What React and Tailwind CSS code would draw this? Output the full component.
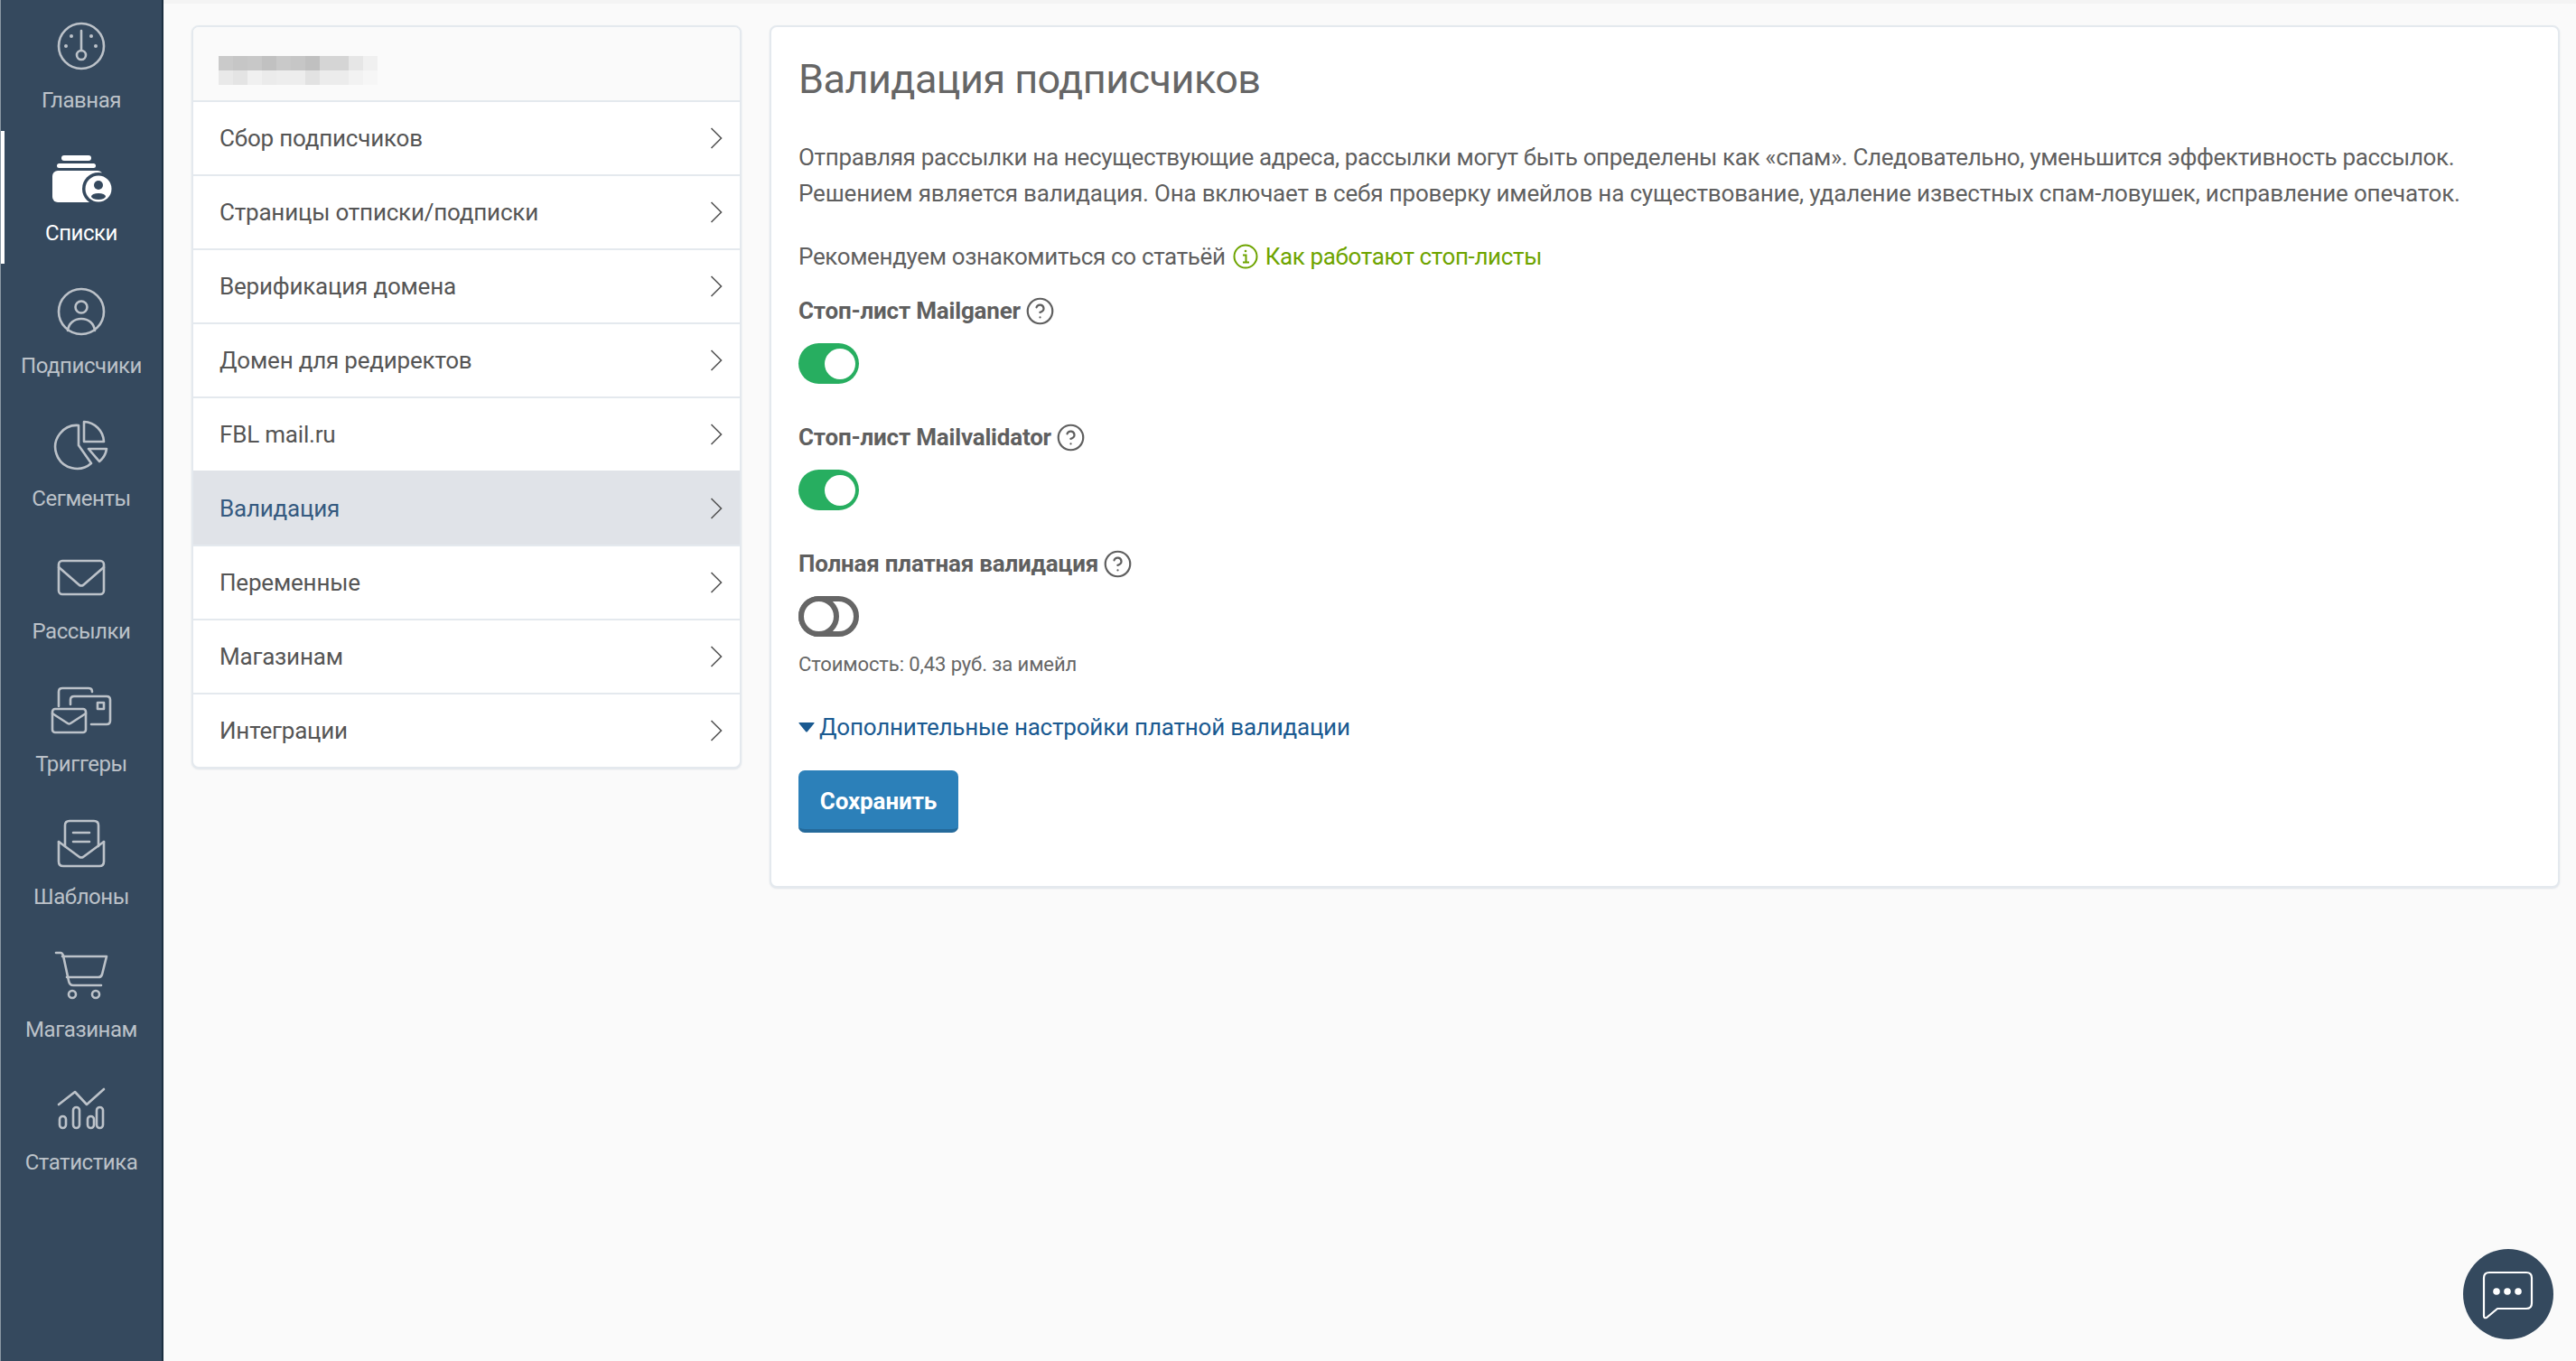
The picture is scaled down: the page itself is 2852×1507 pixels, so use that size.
import React from "react";
import { CircleHelp } from "lucide-react";

const font = { fontFamily: '"Roboto", "Noto Sans", sans-serif' };

const S = ({ top, children, fg = "#bcc2c9" }) => (
  <svg width="80" height="86" viewBox={`50 ${top} 80 86`} fill="none" stroke={fg} strokeWidth="2.6" strokeLinecap="round" strokeLinejoin="round">
    {children}
  </svg>
);

const nav = [
  { label: "Главная", top: -2, icon: (
    <>
      <circle cx="90" cy="51" r="25" />
      <path d="M90 34V56" />
      <circle cx="90" cy="61" r="5" />
      <g fill="#bcc2c9" stroke="none">
        <circle cx="79" cy="40" r="2" /><circle cx="101" cy="40" r="2" /><circle cx="73" cy="51" r="2" /><circle cx="106" cy="51" r="2" />
      </g>
    </>
  )},
  { label: "Списки", top: 145, active: true, icon: (
    <>
      <g fill="#fff" stroke="none">
        <rect x="68" y="172" width="33" height="6" rx="3" />
        <rect x="63" y="181" width="43" height="5" rx="2.5" />
        <rect x="58" y="189" width="56" height="35" rx="6" />
        <circle cx="109" cy="209" r="18" fill="#35495e" />
        <circle cx="109" cy="209" r="14.5" />
      </g>
      <g fill="#35495e" stroke="none">
        <circle cx="109" cy="205" r="5" />
        <ellipse cx="109" cy="217.5" rx="8" ry="3.5" />
      </g>
    </>
  )},
  { label: "Подписчики", top: 292, icon: (
    <>
      <circle cx="90" cy="345" r="25" />
      <circle cx="90" cy="340" r="6.5" />
      <path d="M75 366C76 358 82 353 90 353S104 358 105 366" />
    </>
  )},
  { label: "Сегменты", top: 439, icon: (
    <>
      <path d="M87 471A24 24 0 1 0 101 513L87 493Z" />
      <path d="M93 467A23 23 0 0 1 115 489H93Z" />
      <path d="M98 497H118A22 22 0 0 1 110 511Z" />
    </>
  )},
  { label: "Рассылки", top: 586, icon: (
    <>
      <rect x="65" y="621" width="50" height="37" rx="4" />
      <path d="M65 628L88 648Q90 649 92 648L115 628" />
    </>
  )},
  { label: "Триггеры", top: 733, icon: (
    <>
      <path d="M65 782V766Q65 762 69 762H98Q102 762 102 766" />
      <path d="M78 780V775Q78 771 82 771H118Q122 771 122 775V798Q122 802 118 802H101" />
      <rect x="108" y="778" width="7" height="7" />
      <rect x="58" y="785" width="37" height="26" rx="3" />
      <path d="M58 790L75 801Q76.500 802 78 801L95 790" />
    </>
  )},
  { label: "Шаблоны", top: 880, icon: (
    <>
      <path d="M72 937V914Q72 909 77 909H104Q109 909 109 914V937" />
      <path d="M81 922H99M81 932H99" />
      <path d="M65 932V954Q65 959 70 959H110Q115 959 115 954V932" />
      <path d="M65 932L88 949Q90 950 92 949L115 932" />
    </>
  )},
  { label: "Магазинам", top: 1027, icon: (
    <>
      <path d="M62 1055H67Q69 1055 70 1058L76 1086Q77 1091 81 1091H112" />
      <path d="M69 1059H118L113 1079Q112 1082 109 1082H74" />
      <circle cx="80" cy="1101" r="4" />
      <circle cx="106" cy="1101" r="4" />
    </>
  )},
  { label: "Статистика", top: 1174, icon: (
    <>
      <path d="M65 1223L83 1209L96 1223L115 1206" />
      <rect x="66" y="1236" width="7" height="13" rx="3.500" />
      <rect x="81" y="1226" width="7" height="23" rx="3.500" />
      <rect x="97" y="1236" width="7" height="13" rx="3.500" />
      <rect x="107" y="1226" width="7" height="23" rx="3.500" />
    </>
  )},
];

const menu = ["Сбор подписчиков", "Страницы отписки/подписки", "Верификация домена", "Домен для редиректов", "FBL mail.ru", "Валидация", "Переменные", "Магазинам", "Интеграции"];

const blurTop = ["#cacaca", "#c6c6c6", "#c8c8c8", "#c1c1c1", "#c9c9c9", "#c6c6c6", "#c0c0c0", "#d5d5d5", "#d5d5d5", "#e6e6e6", "#f0f0f0"];
const blurBottom = ["#e9e9e9", "#e4e4e4", "#f0f0f0", "#ebebeb", "#ededed", "#ededed", "#e2e2e2", "#ececec", "#ececec", "#f2f2f2", "#f6f6f6"];

const Chevron = () => (
  <svg width="14" height="24" viewBox="0 0 14 24" fill="none" stroke="#555" strokeWidth="1.6">
    <path d="M1.500 1L12.500 12L1.500 23" />
  </svg>
);

const Help = () => <CircleHelp size={33} strokeWidth={1.6} color="#5f5f5f" />;

const Toggle = ({ on }) =>
  on ? (
    <div className="flex h-[45px] w-[67px] items-center justify-end rounded-full bg-[#27ae60] pr-[4px]">
      <div className="h-[34px] w-[34px] rounded-full bg-white" />
    </div>
  ) : (
    <div className="flex h-[45px] w-[67px] items-center rounded-full border-[6px] border-[#666666] bg-white">
      <div className="-ml-[6px] h-[45px] w-[45px] shrink-0 rounded-full border-[6px] border-[#666666] bg-white" />
    </div>
  );

const Label = ({ children, className = "" }) => (
  <div className={`flex h-[40px] items-center gap-[5px] text-[26px] font-bold tracking-[-0.2px] text-[#5f5f5f] ${className}`}>
    <span>{children}</span>
    <Help />
  </div>
);

export default function App() {
  return (
    <div className="flex h-[1507px] w-[2852px] overflow-hidden bg-[#fafafa]" style={font}>
      <aside className="flex h-full w-[181px] shrink-0 flex-col bg-[#35495e] pt-0 shadow-[inset_1px_0_0_#8a97a3,inset_-2px_0_0_#1b2f40]">
        <div className="-mt-[2px]">
          {nav.map((n) => (
            <div key={n.label} className={`ml-[1px] flex h-[147px] w-[178px] flex-col items-center ${n.active ? "shadow-[inset_4px_0_0_#ffffff]" : ""}`}>
              <S top={n.top} fg={n.active ? "#ffffff" : "#bcc2c9"}>{n.icon}</S>
              <div className={`mt-[12px] text-[24px] leading-[30px] tracking-[-0.45px] ${n.active ? "text-white" : "text-[#bcc2c9]"}`}>{n.label}</div>
            </div>
          ))}
        </div>
      </aside>

      <main className="flex min-w-0 flex-1 flex-col">
        <div className="h-[4px] bg-[#f4f4f4]" />
        <div className="flex items-start gap-[31px] pl-[31px] pr-[18px] pt-[24px]">
          <section className="w-[609px] shrink-0 overflow-hidden rounded-[8px] border-2 border-[#e4e9ee] bg-white shadow-[0_1px_2px_#dfe3e8]">
            <div className="flex h-[81px] flex-col justify-start bg-[#fafafa] pl-[28px] pt-[32px]">
              <div className="flex">{blurTop.map((c, i) => <div key={i} className="h-[16px] w-[16px]" style={{ background: c }} />)}</div>
              <div className="flex">{blurBottom.map((c, i) => <div key={i} className="h-[16px] w-[16px]" style={{ background: c }} />)}</div>
            </div>
            {menu.map((m) => {
              const active = m === "Валидация";
              return (
                <div key={m} className={`flex h-[82px] items-center justify-between border-t-2 pl-[29px] pr-[19px] text-[26px] tracking-[-0.2px] ${active ? "border-[#e0e3e8] bg-[#e0e3e8] text-[#355a80]" : "border-[#e4e9ee] text-[#555555]"}`}>
                  <span className="pt-[1px]">{m}</span>
                  <Chevron />
                </div>
              );
            })}
          </section>

          <section className="h-[955px] min-w-0 flex-1 rounded-[8px] border-2 border-[#e4e9ee] bg-white pl-[30px] pt-[33px] shadow-[0_1px_2px_#dfe3e8]">
            <h1 className="text-[45px] leading-[50px] tracking-[-0.55px] text-[#666666]">Валидация подписчиков</h1>
            <p className="mt-[41px] whitespace-nowrap text-[26px] leading-[40px] tracking-[-0.34px] text-[#5f5f5f]">
              Отправляя рассылки на несуществующие адреса, рассылки могут быть определены как «спам». Следовательно, уменьшится эффективность рассылок.
              <br />
              <span className="tracking-[-0.18px]">Решением является валидация. Она включает в себя проверку имейлов на существование, удаление известных спам-ловушек, исправление опечаток.</span>
            </p>
            <div className="mt-[30px] flex h-[40px] items-center text-[26px] tracking-[-0.36px] text-[#5f5f5f]">
              <span>Рекомендуем ознакомиться со статьёй</span>
              <svg className="ml-[8px] mr-[8px]" width="28" height="28" viewBox="0 0 28 28" fill="none" stroke="#6ea400" strokeWidth="2">
                <circle cx="14" cy="14" r="12.500" />
                <path d="M11 12.500H14.500V20M11 20.500H18" />
                <circle cx="14" cy="8" r="1.300" fill="#6ea400" stroke="none" />
              </svg>
              <span className="text-[#6ea400]">Как работают стоп-листы</span>
            </div>
            <Label className="mt-[20px]">Стоп-лист Mailganer</Label>
            <div className="mt-[16px]"><Toggle on /></div>
            <Label className="mt-[39px]">Стоп-лист Mailvalidator</Label>
            <div className="mt-[16px]"><Toggle on /></div>
            <Label className="mt-[39px]">Полная платная валидация</Label>
            <div className="mt-[16px]"><Toggle /></div>
            <div className="mt-[16px] text-[22px] leading-[30px] tracking-[-0.1px] text-[#666666]">Стоимость: 0,43 руб. за имейл</div>
            <div className="mt-[34px] flex h-[40px] items-center gap-[5px] text-[26px] tracking-[-0.2px] text-[#1a5a91]">
              <svg width="18" height="11" viewBox="0 0 18 11" fill="#1a5a91"><path d="M1 0H17Q18 0 17.400 1L10 10Q9 11 8 10L0.600 1Q0 0 1 0Z" /></svg>
              <span>Дополнительные настройки платной валидации</span>
            </div>
            <button className="mt-[28px] h-[69px] w-[177px] rounded-[7px] border-b-[4px] border-[#256a9b] bg-[#2c80b9] pt-[4px] text-[26px] font-bold tracking-[-0.1px] text-white">Сохранить</button>
          </section>
        </div>
      </main>

      <div className="fixed bottom-[24px] right-[25px] flex h-[100px] w-[100px] items-center justify-center rounded-full bg-[#34495e]">
        <svg width="100" height="100" viewBox="2727 1383 100 100" fill="none" stroke="#fff" strokeWidth="2.200" strokeLinejoin="round">
          <path d="M2750 1415Q2750 1409 2756 1409H2797Q2803 1409 2803 1415V1443Q2803 1449 2797 1449H2765L2753 1459Q2750 1460 2750 1457Z" />
          <g fill="#fff" stroke="none">
            <circle cx="2764" cy="1430" r="3.800" /><circle cx="2776" cy="1430" r="3.800" /><circle cx="2788" cy="1430" r="3.800" />
          </g>
        </svg>
      </div>
    </div>
  );
}
